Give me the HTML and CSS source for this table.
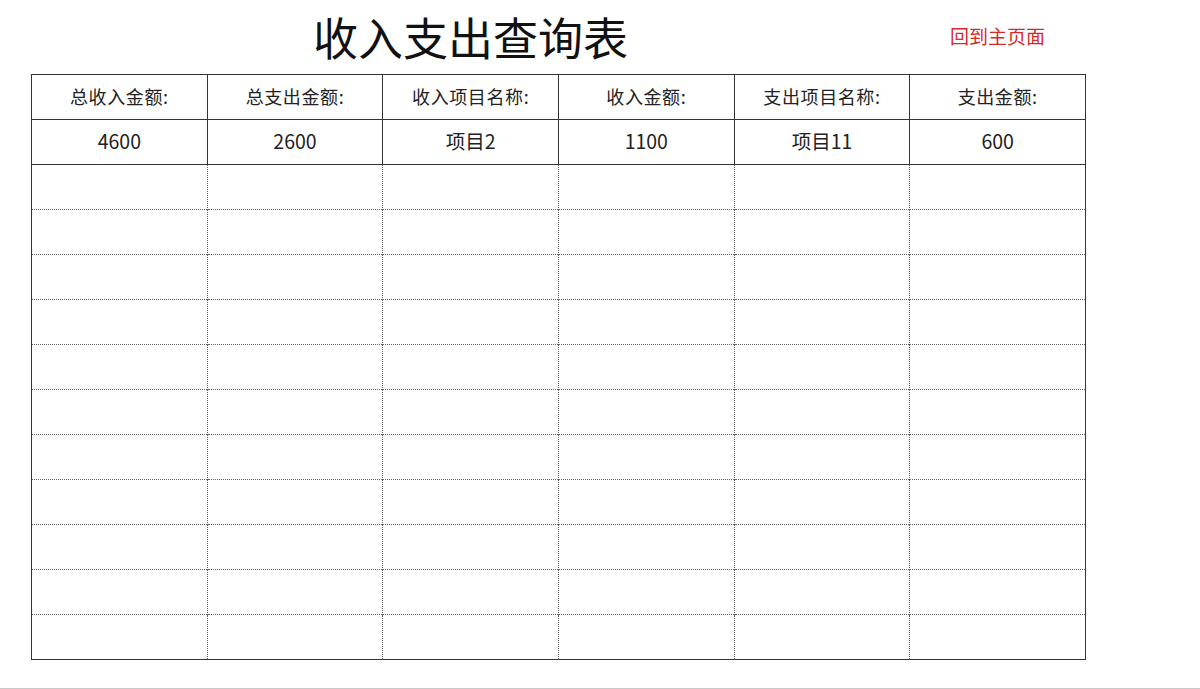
FILE: index.html
```html
<!DOCTYPE html>
<html lang="zh">
<head>
<meta charset="utf-8">
<title>收入支出查询表</title>
<link rel="stylesheet" href="styles.css">
</head>
<body>
<div class="page">
  <header class="top">
    <h1 class="title">收入支出查询表</h1>
    <a class="back" href="#">回到主页面</a>
  </header>
  <table class="grid">
    <tr class="head"><td>总收入金额:</td><td>总支出金额:</td><td>收入项目名称:</td><td>收入金额:</td><td>支出项目名称:</td><td>支出金额:</td></tr>
    <tr class="data"><td>4600</td><td>2600</td><td>项目2</td><td>1100</td><td>项目11</td><td>600</td></tr>
    <tr class="empty"><td></td><td></td><td></td><td></td><td></td><td></td></tr>
    <tr class="empty"><td></td><td></td><td></td><td></td><td></td><td></td></tr>
    <tr class="empty"><td></td><td></td><td></td><td></td><td></td><td></td></tr>
    <tr class="empty"><td></td><td></td><td></td><td></td><td></td><td></td></tr>
    <tr class="empty"><td></td><td></td><td></td><td></td><td></td><td></td></tr>
    <tr class="empty"><td></td><td></td><td></td><td></td><td></td><td></td></tr>
    <tr class="empty"><td></td><td></td><td></td><td></td><td></td><td></td></tr>
    <tr class="empty"><td></td><td></td><td></td><td></td><td></td><td></td></tr>
    <tr class="empty"><td></td><td></td><td></td><td></td><td></td><td></td></tr>
    <tr class="empty"><td></td><td></td><td></td><td></td><td></td><td></td></tr>
    <tr class="empty"><td></td><td></td><td></td><td></td><td></td><td></td></tr>
  </table>
</div>
<div class="bottombar"></div>
</body>
</html>
```
FILE: styles.css
```css
html, body {
  margin: 0;
  padding: 0;
  background: #fff;
}
body {
  font-family: "Noto Sans CJK SC", "Noto Sans", sans-serif;
  color: #222;
  height: 689px;
  overflow: hidden;
  position: relative;
}
.page {
  padding-left: 31px;
}
.top {
  display: flex;
  align-items: center;
  height: 74px;
}
.title {
  margin: 0 0 0 282px;
  font-size: 45px;
  font-weight: 400;
  line-height: 74px;
  color: #111;
}
.back {
  margin-left: 322px;
  margin-top: -3px;
  font-size: 19px;
  color: #d42a2a;
  text-decoration: none;
}
.grid {
  border-collapse: collapse;
  table-layout: fixed;
  width: 1055px;
  border: 1px solid #333;
}
.grid td {
  height: 44px;
  padding: 0;
  text-align: center;
  font-size: 19.5px;
  color: #222;
  border-left: 1px dotted #666;
  border-top: 1px dotted #666;
}
.grid .head td,
.grid .data td {
  border-left: 1px solid #333;
  border-top: 1px solid #333;
}
.grid .data td {
  padding-bottom: 4px;
  height: 40px;
}
.grid .data + .empty td {
  border-top: 1px solid #333;
}
.grid .head td {
  font-size: 18px;
  letter-spacing: 0.6px;
  padding-bottom: 2px;
  height: 42px;
}
.bottombar {
  position: absolute;
  left: 0;
  right: 0;
  bottom: 0;
  height: 1px;
  background: #c8c8c8;
}
```
